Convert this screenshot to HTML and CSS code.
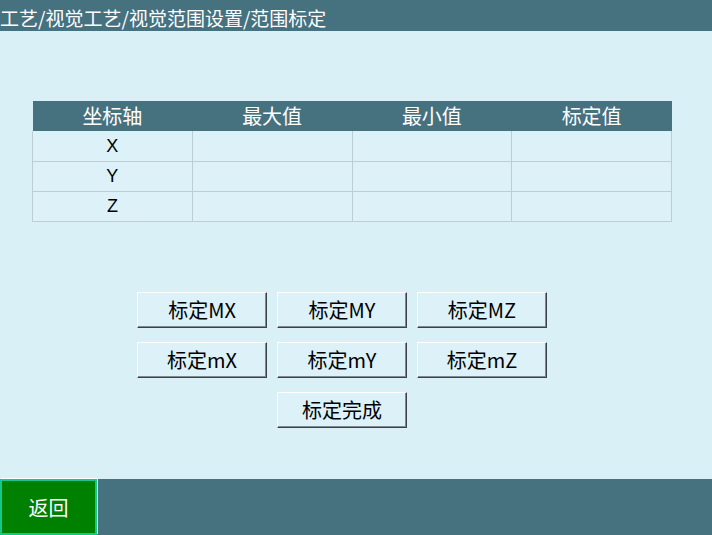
FILE: index.html
```html
<!DOCTYPE html>
<html>
<head>
<meta charset="utf-8">
<link rel="stylesheet" href="styles.css">
</head>
<body>
<div class="screen">
  <div class="topbar">工艺/视觉工艺/视觉范围设置/范围标定</div>
  <div class="main">
    <table class="grid">
      <thead>
        <tr><th>坐标轴</th><th>最大值</th><th>最小值</th><th>标定值</th></tr>
      </thead>
      <tbody>
        <tr><td>X</td><td></td><td></td><td></td></tr>
        <tr><td>Y</td><td></td><td></td><td></td></tr>
        <tr><td>Z</td><td></td><td></td><td></td></tr>
      </tbody>
    </table>
    <div class="buttons">
      <button class="btn">标定MX</button>
      <button class="btn">标定MY</button>
      <button class="btn">标定MZ</button>
      <button class="btn">标定mX</button>
      <button class="btn">标定mY</button>
      <button class="btn">标定mZ</button>
      <button class="btn done">标定完成</button>
    </div>
  </div>
  <div class="bottombar">
    <button class="back">返回</button>
  </div>
</div>
</body>
</html>
```
FILE: styles.css
```css
* { box-sizing: border-box; }
html, body {
  margin: 0;
  padding: 0;
  background: #daf0f7;
}
.screen {
  width: 712px;
  height: 535px;
  display: flex;
  flex-direction: column;
  font-family: "Noto Sans CJK SC", "Noto Sans", sans-serif;
  overflow: hidden;
}
.topbar {
  height: 31px;
  background: #46717f;
  color: #ffffff;
  font-size: 19px;
  line-height: 36px;
  white-space: nowrap;
  overflow: hidden;
}
.main {
  flex: 1;
  padding-top: 70px;
  display: flex;
  flex-direction: column;
}
.grid {
  margin-left: 32px;
  width: 640px;
  border-collapse: collapse;
  table-layout: fixed;
}
.grid th {
  height: 30px;
  padding: 0;
  background: #46717f;
  color: #ffffff;
  font-weight: normal;
  font-size: 20px;
  line-height: 30px;
}
.grid td {
  height: 30px;
  padding: 0;
  border: 1px solid #bccdd3;
  background: #dcf1f8;
  color: #000;
  text-align: center;
  font-family: "Liberation Sans", "Noto Sans CJK SC", sans-serif;
  font-size: 18px;
  line-height: 28px;
}
.grid tbody tr:first-child td { border-top: none; }
.buttons {
  margin-top: 70px;
  margin-left: 137px;
  display: grid;
  grid-template-columns: repeat(3, 130px);
  grid-auto-rows: 36px;
  column-gap: 10px;
  row-gap: 14px;
}
.btn {
  margin: 0;
  padding: 0;
  background: #dcf1f8;
  border-top: 1px solid #ffffff;
  border-left: 1px solid #ffffff;
  border-right: 1px solid #3c4248;
  border-bottom: 1px solid #3c4248;
  box-shadow: inset -1px -1px 0 #7f8a90;
  color: #000;
  font-family: "Noto Sans CJK SC", sans-serif;
  font-size: 20px;
  line-height: 34px;
}
.btn.done { grid-column: 2; }
.bottombar {
  height: 56px;
  background: #46717f;
  display: flex;
}
.back {
  margin: 0;
  padding: 0;
  width: 97px;
  height: 56px;
  background: #008000;
  border: 2px solid #14c88c;
  box-shadow: 1px -1px 0 #ffffff;
  color: #ffffff;
  font-family: "Noto Sans CJK SC", sans-serif;
  font-size: 20px;
}
```
